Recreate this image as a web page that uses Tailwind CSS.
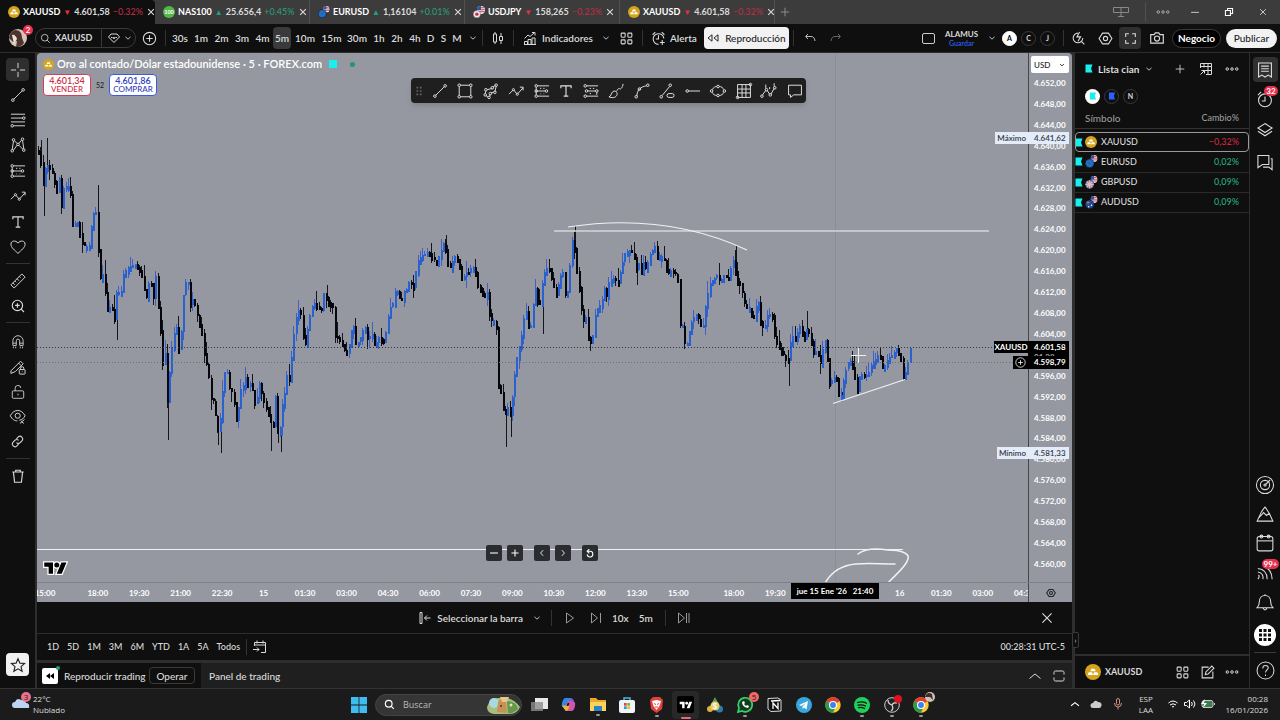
<!DOCTYPE html>
<html lang="es">
<head>
<meta charset="utf-8">
<meta name="viewport" content="width=device-width, initial-scale=1">
<title>XAUUSD 4.601,58</title>
<script src="https://cdn.jsdelivr.net/npm/@tailwindcss/browser@4"></script>
</head>
<body class="h-screen min-h-[720px] flex flex-col overflow-hidden bg-[#2e2e2e] text-[#dbdbdb] text-[10px] leading-3 font-['Lato','Noto_Sans',sans-serif] font-medium">

<!-- Shared icons -->
<svg class="hidden" aria-hidden="true">
  <defs>
  <symbol id="x" viewBox="0 0 28 28"><path d="M6 6l16 16M22 6L6 22"/></symbol>
  <symbol id="plus" viewBox="0 0 28 28"><path d="M14 4v20M4 14h20"/></symbol>
  <symbol id="chev" viewBox="0 0 28 28"><path d="M5 10l9 8 9-8"/></symbol>
  <symbol id="chevup" viewBox="0 0 28 28"><path d="M3 19l11-9 11 9"/></symbol>
  <symbol id="search" viewBox="0 0 28 28"><circle cx="12" cy="12" r="8.500"/><path d="M18 18l7 7"/></symbol>
  <symbol id="dots" viewBox="0 0 28 28"><circle cx="4.500" cy="14" r="2.500"/><circle cx="14" cy="14" r="2.500"/><circle cx="23.500" cy="14" r="2.500"/></symbol>
  <symbol id="grid4" viewBox="0 0 28 28"><rect x="4" y="4" width="7.500" height="7.500" rx="1.500"/><rect x="16.500" y="4" width="7.500" height="7.500" rx="1.500"/><rect x="4" y="16.500" width="7.500" height="7.500" rx="1.500"/><rect x="16.500" y="16.500" width="7.500" height="7.500" rx="1.500"/></symbol>
  <symbol id="trend" viewBox="0 0 28 28"><circle cx="6" cy="22" r="2"/><circle cx="22" cy="6" r="2"/><path d="M7.500 20.500l13-13"/></symbol>
  <symbol id="crosshair" viewBox="0 0 28 28"><path d="M14 3v8M14 17v8M3 14h8M17 14h8"/></symbol>
  <symbol id="fib" viewBox="0 0 28 28"><path d="M3 5h22M3 11h18M3 17h22M7 23h18"/><circle cx="23" cy="11" r="2"/><circle cx="5" cy="23" r="2"/></symbol>
  <symbol id="pattern" viewBox="0 0 28 28"><circle cx="5" cy="23" r="2"/><circle cx="7" cy="6" r="2"/><circle cx="14" cy="13" r="2"/><circle cx="21" cy="5" r="2"/><circle cx="23" cy="22" r="2"/><path d="M5 21l2-13M8.500 7.500l4 4M15.500 11.500l4-5M21 7l2 13M7 22l5.500-7.500M15.500 14.500l6 6"/></symbol>
  <symbol id="forecast" viewBox="0 0 28 28"><path d="M7 6h18M7 14h12M7 22h18M5 8v12" /><circle cx="5" cy="6" r="2"/><circle cx="5" cy="14" r="2"/><circle cx="5" cy="22" r="2"/><circle cx="21" cy="14" r="2"/><path d="M12 9v2M17 9v2M12 18v1M17 18v1"/></symbol>
  <symbol id="forecastdown" viewBox="0 0 28 28"><path d="M7 6h18M9 14h12M7 22h18M23 16v4"/><circle cx="5" cy="6" r="2"/><circle cx="7" cy="14" r="2"/><circle cx="5" cy="22" r="2"/><circle cx="23" cy="14" r="2"/><path d="M12 10h2M17 10h2M12 18h2"/></symbol>
  <symbol id="wave" viewBox="0 0 28 28"><path d="M3 19l6-6M11 13l4 5M17 18l8-9M20 8h5v5"/><circle cx="10" cy="12" r="1.700"/><circle cx="16" cy="19" r="1.700"/></symbol>
  <symbol id="text" viewBox="0 0 28 28"><path d="M5 9V5h18v4M14 5v18M10 23h8"/></symbol>
  <symbol id="heart" viewBox="0 0 28 28"><path d="M14 24C9 19 3 15 3 9.500 3 4 10.500 3 14 8c3.500-5 11-4 11 1.500C25 15 19 19 14 24z"/></symbol>
  <symbol id="ruler" viewBox="0 0 28 28"><path d="M3 20L20 3l5 5L8 25zM16 7l2 2M12.500 10.500l3 3M9 14l2 2M6 17l3 3"/></symbol>
  <symbol id="zoom" viewBox="0 0 28 28"><circle cx="13" cy="13" r="9"/><path d="M19.500 19.500l5 5M9 13h8M13 9v8"/></symbol>
  <symbol id="magnet" viewBox="0 0 28 28"><path d="M5 20v-8a9 9 0 0118 0v8h-6v-8a3 3 0 00-6 0v8zM5 16h6M17 16h6M6 22v3M10 22v3M18 22v3M22 22v3"/></symbol>
  <symbol id="pencillock" viewBox="0 0 28 28"><path d="M3 20L18 5l4 4L10 21l-7 3zM15 8l4 4"/><rect x="16" y="18" width="9" height="7" rx="1"/><path d="M18 18v-2a2.500 2.500 0 015 0v2M20.500 21v1"/></symbol>
  <symbol id="lock" viewBox="0 0 28 28"><rect x="4" y="12" width="20" height="13" rx="2"/><path d="M9 12V8a5 5 0 0110-1M14 17v3"/></symbol>
  <symbol id="eye" viewBox="0 0 28 28"><path d="M2 12c6-11 17-11 23 0-2 4-5 7-9 7M2 12c3 6 7 8 11 8"/><circle cx="13.500" cy="12" r="4"/><path d="M17 24l7-6M19 21l4 3"/></symbol>
  <symbol id="link" viewBox="0 0 28 28"><path d="M12 9l4-4c4-3 10 3 7 7l-4 4c-2 2-5 2-7 0M16 19l-4 4c-4 3-10-3-7-7l4-4c2-2 5-2 7 0"/></symbol>
  <symbol id="trash" viewBox="0 0 28 28"><path d="M4 7h20M10 7V4h8v3M6 7l2 18h12l2-18"/></symbol>
  <symbol id="star" viewBox="0 0 28 28"><path d="M14 3l3.300 7.700 8.200.7-6.200 5.500 1.900 8.100L14 20.700 6.800 25l1.900-8.100-6.200-5.500 8.200-.7z"/></symbol>
  <symbol id="rect" viewBox="0 0 28 28"><path d="M7 5h14M7 23h14M5 7v14M23 7v14"/><circle cx="5" cy="5" r="2"/><circle cx="23" cy="5" r="2"/><circle cx="5" cy="23" r="2"/><circle cx="23" cy="23" r="2"/></symbol>
  <symbol id="polygon" viewBox="0 0 28 28"><path d="M8 12l8-2M17 8l4-3M22 7l-2 8M18 16l-4 1M13 19l-1 3M9 23l-3-2M5 18l1-4"/><circle cx="6" cy="12" r="2"/><circle cx="16" cy="9" r="2"/><circle cx="22" cy="5" r="2"/><circle cx="20" cy="16" r="2"/><circle cx="13" cy="18" r="2"/><circle cx="11" cy="24" r="2"/><circle cx="5" cy="20" r="2"/></symbol>
  <symbol id="brush" viewBox="0 0 28 28"><path d="M3 23c4 0 3-8 8-9 4 0 6 4 4 7-2 4-8 4-12 2zM14 15c2-2 3-5 5-5 3 3 6-4 6-7"/></symbol>
  <symbol id="curve" viewBox="0 0 28 28"><path d="M6 22C6 13 12 7 21 6"/><circle cx="5" cy="23" r="2"/><circle cx="10" cy="11" r="2"/><circle cx="23" cy="5" r="2"/></symbol>
  <symbol id="trendinfo" viewBox="0 0 28 28"><circle cx="5" cy="23" r="2"/><circle cx="19" cy="5" r="2"/><path d="M6.500 21L18 7"/><rect x="14" y="18" width="11" height="6" rx="3"/></symbol>
  <symbol id="hline" viewBox="0 0 28 28"><circle cx="5" cy="14" r="2"/><path d="M7 14h18"/></symbol>
  <symbol id="ellipse" viewBox="0 0 28 28"><path d="M5 12c2-4 5-5 7-5M16 7c3 0 6 2 7 5M23 16c-1 3-4 5-7 5M12 21c-3 0-6-2-7-5"/><circle cx="14" cy="7" r="2"/><circle cx="14" cy="21" r="2"/><circle cx="4" cy="14" r="2"/><circle cx="24" cy="14" r="2"/></symbol>
  <symbol id="gann" viewBox="0 0 28 28"><path d="M4 4h20v20H4zM4 11h20M4 17h20M11 4v20M17 4v20"/><circle cx="24" cy="4" r="2"/><circle cx="4" cy="24" r="2"/></symbol>
  <symbol id="cycle" viewBox="0 0 28 28"><path d="M4 20l5-7M11 13l4 6M17 19l5-9M9 4v6M15 8v3M22 2v5"/><circle cx="3" cy="22" r="2"/><circle cx="10" cy="12" r="2"/><circle cx="16" cy="20" r="2"/><circle cx="23" cy="9" r="2"/></symbol>
  <symbol id="note" viewBox="0 0 28 28"><path d="M4 5h20v15H12l-5 4v-4H4z"/></symbol>
  <symbol id="hex" viewBox="0 0 28 28"><path d="M8.500 4h11L26 14l-6.500 10h-11L2 14z"/><circle cx="14" cy="14" r="4"/></symbol>
  <symbol id="full" viewBox="0 0 28 28"><path d="M5 11V5h6M17 5h6v6M23 17v6h-6M11 23H5v-6"/></symbol>
  <symbol id="max" viewBox="0 0 28 28"><path d="M4 11V7c0-2 1-3 3-3h3M18 4h3c2 0 3 1 3 3v4M24 17v4c0 2-1 3-3 3h-3M10 24H7c-2 0-3-1-3-3v-4M10 4h8M10 24h8"/></symbol>
  <symbol id="goldbars" viewBox="0 0 24 24"><circle cx="12" cy="12" r="12" fill="#d4a41c" stroke="none"/><path d="M9.500 7h5l1.500 4H8zM5.500 12.500h5l1.500 4H4zM13.500 12.500h5l1.500 4h-8z" fill="#fff" stroke="none"/></symbol>
  <symbol id="usflag" viewBox="0 0 24 24"><circle cx="12" cy="12" r="12" fill="#f1eef0" stroke="none"/><path d="M3 5h18M1 11h22M1 17h22" stroke="#c43a50" stroke-width="3"/><path d="M12 0A12 12 0 000 12h12z" fill="#2756a8" stroke="none"/></symbol>
  <symbol id="eur" viewBox="0 0 28 28"><use href="#usflag" x="12" y="0" width="15" height="15"/><circle cx="10" cy="18" r="9.500" fill="#1f66b8" stroke="#0f0f0f"/><circle cx="10" cy="18" r="5" fill="none" stroke="#5da0e0" stroke-width="1.500" stroke-dasharray="1.500 2.400"/></symbol>
  <symbol id="gbp" viewBox="0 0 28 28"><use href="#usflag" x="12" y="0" width="15" height="15"/><circle cx="10" cy="18" r="9.500" fill="#7d84b0" stroke="#0f0f0f"/><path d="M10 9v18M1 18h18M4 12l12 12M16 12L4 24" stroke="#e8b8c0" stroke-width="2.500"/></symbol>
  <symbol id="aud" viewBox="0 0 28 28"><use href="#usflag" x="12" y="0" width="15" height="15"/><circle cx="10" cy="18" r="9.500" fill="#1c4c9c" stroke="#0f0f0f"/><path d="M3 14h7M6.500 11v7" stroke="#e06070" stroke-width="2"/><circle cx="14" cy="20" r="1.600" fill="#fff" stroke="none"/><circle cx="8" cy="23" r="1.600" fill="#fff" stroke="none"/></symbol>
  <symbol id="jpy" viewBox="0 0 28 28"><use href="#usflag" x="9" y="0" width="19" height="19"/><circle cx="9" cy="19" r="8.500" fill="#eee" stroke="#3c3c3c"/><circle cx="9" cy="19" r="4" fill="#d02848" stroke="none"/></symbol>
  <symbol id="flag" viewBox="0 0 16 18"><path d="M1 1h14l-3 8 3 8H1z" fill="currentColor" stroke="none"/></symbol>
  <symbol id="tv" viewBox="-2 2 40 22"><path d="M14 22H7V11H0V4h14zM28 22h-8l7.500-18h8z"/><circle cx="20" cy="8" r="4"/></symbol>
  <symbol id="chrome" viewBox="0 0 28 28"><circle cx="14" cy="14" r="12" fill="#fbc934" stroke="none"/><path d="M14 14L3.600 8A12 12 0 0124.400 8z" fill="#e23b30" stroke="none"/><path d="M14 14L3.600 8A12 12 0 0014 26l4-9z" fill="#279a4c" stroke="none"/><circle cx="14" cy="14" r="5.500" fill="#3f82ee" stroke="#fff" stroke-width="1.800"/></symbol>
  </defs>
</svg>

<!-- Window tabs -->
<header class="h-6 shrink-0 flex items-center bg-[#3c3c3c]">
  <nav class="flex h-full text-[9px] font-bold" aria-label="Pestañas">
    <div class="w-[155px] h-full flex items-center gap-[3px] pl-2 pr-1 rounded-tr bg-[#0f0f0f] whitespace-nowrap">
      <svg class="size-3 shrink-0"><use href="#goldbars"/></svg><a href="#xau" class="text-white">XAUUSD</a><span class="text-[8px] text-[#e03048]">▼</span><span>4.601,58</span><span class="font-medium text-[#b82c44]">−0.32%</span><button aria-label="Cerrar" class="ml-auto"><svg class="size-2.5 fill-none stroke-current stroke-3"><use href="#x"/></svg></button>
    </div>
    <div class="w-[155px] h-full flex items-center gap-[3px] pl-2 pr-1 border-r border-[#505050] whitespace-nowrap">
      <svg class="size-3 shrink-0" viewBox="0 0 24 24"><circle cx="12" cy="12" r="12" fill="#54b848"/><text x="12" y="16" text-anchor="middle" font-size="11" font-weight="700" fill="#fff">100</text></svg><a href="#nas" class="text-white">NAS100</a><span class="text-[8px] text-[#22a07c]">▲</span><span>25.656,4</span><span class="font-medium text-[#2c9a78]">+0.45%</span><button aria-label="Cerrar" class="ml-auto"><svg class="size-2.5 fill-none stroke-current stroke-3"><use href="#x"/></svg></button>
    </div>
    <div class="w-[155px] h-full flex items-center gap-[3px] pl-2 pr-1 border-r border-[#505050] whitespace-nowrap">
      <svg class="size-3 shrink-0"><use href="#eur"/></svg><a href="#eurusd" class="text-white">EURUSD</a><span class="text-[8px] text-[#22a07c]">▲</span><span>1,16104</span><span class="font-medium text-[#2c9a78]">+0.01%</span><button aria-label="Cerrar" class="ml-auto"><svg class="size-2.5 fill-none stroke-current stroke-3"><use href="#x"/></svg></button>
    </div>
    <div class="w-[155px] h-full flex items-center gap-[3px] pl-2 pr-1 border-r border-[#505050] whitespace-nowrap">
      <svg class="size-3 shrink-0"><use href="#jpy"/></svg><a href="#usdjpy" class="text-white">USDJPY</a><span class="text-[8px] text-[#e03048]">▼</span><span>158,265</span><span class="font-medium text-[#b82c44]">−0.23%</span><button aria-label="Cerrar" class="ml-auto"><svg class="size-2.5 fill-none stroke-current stroke-3"><use href="#x"/></svg></button>
    </div>
    <div class="w-[155px] h-full flex items-center gap-[3px] pl-2 pr-1 border-r border-[#505050] whitespace-nowrap">
      <svg class="size-3 shrink-0"><use href="#goldbars"/></svg><a href="#xau2" class="text-white">XAUUSD</a><span class="text-[8px] text-[#e03048]">▼</span><span>4.601,58</span><span class="font-medium text-[#b82c44]">−0.32%</span><button aria-label="Cerrar" class="ml-auto"><svg class="size-2.5 fill-none stroke-current stroke-3"><use href="#x"/></svg></button>
    </div>
  </nav>
  <button aria-label="Nueva pestaña" class="px-1"><svg class="size-3 fill-none stroke-[#999] stroke-2"><use href="#plus"/></svg></button>
  <div class="ml-auto flex items-center">
    <svg class="w-4 h-3 mr-4 fill-none stroke-[#888] stroke-1" viewBox="0 0 16 12"><path d="M.5 1.500h15v5H.5zM8 1.500v9M5 10.500h6"/></svg>
    <span class="w-px h-5 bg-[#505050] mr-2.5"></span>
    <button aria-label="Más" class="mr-5"><svg class="size-3.5 fill-none stroke-[#aaa] stroke-2"><use href="#dots"/></svg></button>
    <button aria-label="Minimizar" class="mr-6"><svg class="size-2.5 fill-none stroke-white stroke-2" viewBox="0 0 28 28"><path d="M3 15h22"/></svg></button>
    <button aria-label="Restaurar" class="mr-6"><svg class="size-2.5 fill-none stroke-white stroke-3" viewBox="0 0 28 28"><path d="M4 10h14v14H4zM10 10V4h14v14h-6"/></svg></button>
    <button aria-label="Cerrar ventana" class="mr-3"><svg class="size-2.5 fill-none stroke-white stroke-2"><use href="#x"/></svg></button>
  </div>
</header>

<!-- Main toolbar -->
<div class="h-7 shrink-0 flex items-center bg-[#0f0f0f] font-semibold whitespace-nowrap mb-px">
  <button aria-label="Perfil" class="relative w-[35px] h-7 grid place-items-center"><svg class="size-[18px]" viewBox="0 0 18 18"><circle cx="9" cy="9" r="9" fill="#d8c4b6"/><path d="M0 9a9 9 0 016-8c5 0 7 3 7 8l2 5a9 9 0 01-8 4l1-6-4 1z" fill="#4c352e"/><path d="M3 6c2-1 4 1 5 4l-3 5z" fill="#eee3dc"/></svg><span class="absolute left-[23px] top-px size-2.5 rounded-full bg-[#e8304f] text-white text-[8px] leading-[10px] text-center">2</span></button>
  <div class="w-[101px] h-5 flex items-center rounded-full border border-[#3a3a3a]">
    <button class="w-[66px] h-full flex items-center gap-1 pl-1 border-r border-[#3a3a3a] text-[9px] font-bold"><svg class="size-[11px] fill-none stroke-current stroke-2"><use href="#search"/></svg>XAUUSD</button>
    <button aria-label="Marcador" class="flex items-center pl-1.5 gap-1"><svg class="w-3 h-2.5 fill-none stroke-current stroke-1" viewBox="0 0 12 10"><path d="M3 1h6l2.500 3L6 9.500.5 4zM3 4.500h1.500M7.500 4.500H9M5 4l1 2 1-2"/></svg><svg class="size-2 fill-none stroke-current stroke-3"><use href="#chev"/></svg></button>
  </div>
  <button aria-label="Comparar" class="w-[26px] grid place-items-center"><svg class="size-[15px] fill-none stroke-current stroke-2" viewBox="0 0 28 28"><circle cx="14" cy="14" r="11.500"/><path d="M14 8v12M8 14h12"/></svg></button>
  <span class="w-px h-4 mx-[3px] bg-[#333]"></span>
  <div class="flex items-center">
    <button class="w-[22px]">30s</button><button class="w-5">1m</button><button class="w-[21px]">2m</button><button class="w-5">3m</button><button class="w-[21px]">4m</button><button class="w-[18px] h-[22px] rounded bg-[#3a3a3a]">5m</button><button class="w-[28px]">10m</button><button class="w-[25px]">15m</button><button class="w-[26px]">30m</button><button class="w-[18px]">1h</button><button class="w-[18px]">2h</button><button class="w-[18px]">4h</button><button class="w-[13px]">D</button><button class="w-[13px]">S</button><button class="w-[14px]">M</button>
    <button aria-label="Más intervalos" class="w-[18px] grid place-items-center"><svg class="size-2 fill-none stroke-current stroke-3"><use href="#chev"/></svg></button>
  </div>
  <span class="w-px h-4 bg-[#333]"></span>
  <button aria-label="Velas" class="w-[30px] grid place-items-center"><svg class="w-3 h-[14px] fill-none stroke-current stroke-1" viewBox="0 0 12 14"><path d="M1.500 3h3v8h-3zM3 1v2M3 11v2M7.500 5.500h3v4h-3zM9 2v3M9 10v3"/></svg></button>
  <span class="w-px h-4 bg-[#333]"></span>
  <button class="flex items-center gap-1.5 pl-2.5"><svg class="w-3 h-[13px] fill-none stroke-current stroke-1" viewBox="0 0 12 13"><path d="M.5 6.500L4 3l2 1.500L10 1M8 .5h3v3M.5 12.500v-3h3v3M4 12.500v-5h3v5M8 12.500V6h3v6.500zM0 12.500h12"/></svg>Indicadores</button>
  <button aria-label="Favoritos" class="w-[26px] grid place-items-center"><svg class="size-2 fill-none stroke-current stroke-3"><use href="#chev"/></svg></button>
  <button aria-label="Plantillas" class="w-[15px]"><svg class="size-[15px] fill-none stroke-current stroke-2"><use href="#grid4"/></svg></button>
  <span class="w-px h-4 ml-2 bg-[#333]"></span>
  <button class="flex items-center gap-1 pl-2"><svg class="size-[15px] fill-none stroke-current stroke-2" viewBox="0 0 28 28"><path d="M24 14a10 10 0 10-10 11M14 8v7h-5M3 7l5-5M20 2l5 5M21 17v9M16.500 21.500h9"/></svg>Alerta</button>
  <button class="ml-[7px] h-[22px] w-[85px] shrink-0 flex items-center justify-center gap-1.5 rounded bg-[#f2f2f2] text-[#222] font-medium"><svg class="w-3 h-2 fill-none stroke-current stroke-1" viewBox="0 0 12 8"><path d="M5 .8v6.400L1 4zM11 .8v6.400L7 4z"/></svg>Reproducción</button>
  <span class="w-px h-4 ml-1 bg-[#333]"></span>
  <button aria-label="Deshacer" class="ml-2.5"><svg class="w-3 h-2.5 fill-none stroke-[#bbb] stroke-1" viewBox="0 0 12 10"><path d="M4 1L1.500 3.500 4 6M2 3.500h5q3.500 0 4 4.500"/></svg></button>
  <button aria-label="Rehacer" class="ml-3.5"><svg class="w-3 h-2.5 fill-none stroke-[#666] stroke-1" viewBox="0 0 12 10"><path d="M8 1l2.500 2.500L8 6M10 3.500H5Q1.500 3.500 1 8"/></svg></button>
  <div class="ml-auto flex items-center pr-[3px]">
    <span class="w-[13px] h-[11px] rounded-xs border border-[#ccc]"></span>
    <button class="w-[53px] text-[8px] leading-[9px] font-bold">ALAMUS<span class="block text-[7px] leading-2 font-semibold text-[#2d5cf0]">Guardar</span></button>
    <svg class="size-2 mr-1.5 fill-none stroke-current stroke-3"><use href="#chev"/></svg>
    <span class="flex gap-1 text-[7px] leading-[13px] text-center font-bold"><button class="size-[15px] rounded-full border border-white bg-white text-black">A</button><button class="size-[15px] rounded-full border border-[#3a3a3a]">C</button><button class="size-[15px] rounded-full border border-[#3a3a3a]">J</button></span>
    <span class="w-px h-4 ml-2 bg-[#333]"></span>
    <button aria-label="Búsqueda rápida" class="w-[29px] grid place-items-center"><svg class="size-[15px] fill-none stroke-current stroke-2" viewBox="0 0 28 28"><path d="M13 4a9 9 0 109 9M19 19l6 6M16 2l-5 9h7l-5 8"/></svg></button>
    <button aria-label="Configuración" class="w-6 grid place-items-center"><svg class="size-[15px] fill-none stroke-current stroke-2"><use href="#hex"/></svg></button>
    <button aria-label="Pantalla completa" class="size-[22px] mx-0.5 grid place-items-center rounded bg-[#303030]"><svg class="size-[15px] fill-none stroke-current stroke-2"><use href="#full"/></svg></button>
    <button aria-label="Captura" class="w-[27px] grid place-items-center"><svg class="size-4 fill-none stroke-current stroke-2" viewBox="0 0 28 28"><path d="M3 8h6l2-3h6l2 3h6v15H3z"/><circle cx="14" cy="15" r="4.500"/></svg></button>
    <button class="w-[49px] h-[19px] ml-0.5 rounded-full border border-[#3a3a3a] bg-black text-white font-bold">Negocio</button>
    <button class="w-[51px] h-[19px] ml-[5px] rounded-full bg-[#f2f2f2] text-[#222] font-medium">Publicar</button>
  </div>
</div>

<div class="flex-1 min-h-0 flex">

  <!-- Drawing tools -->
  <aside class="w-[35px] mr-0.5 shrink-0 flex flex-col items-center bg-[#0f0f0f] pt-[5px]">
    <button aria-label="Cruz" class="w-[23px] h-[23px] mb-px grid place-items-center rounded bg-[#2e2e2e]"><svg class="size-[18px] fill-none stroke-current stroke-[1.500]"><use href="#crosshair"/></svg></button>
    <button aria-label="Línea de tendencia" class="h-[25px]"><svg class="size-[18px] fill-none stroke-current stroke-[1.500]"><use href="#trend"/></svg></button>
    <button aria-label="Fibonacci" class="h-[25px]"><svg class="size-[18px] fill-none stroke-current stroke-[1.500]"><use href="#fib"/></svg></button>
    <button aria-label="Patrones" class="h-[26px]"><svg class="size-[18px] fill-none stroke-current stroke-[1.500]"><use href="#pattern"/></svg></button>
    <button aria-label="Previsión" class="h-[25px]"><svg class="size-[18px] fill-none stroke-current stroke-[1.500]"><use href="#forecast"/></svg></button>
    <button aria-label="Ondas" class="h-[26px]"><svg class="size-[18px] fill-none stroke-current stroke-[1.500]"><use href="#wave"/></svg></button>
    <button aria-label="Texto" class="h-[25px]"><svg class="size-4 fill-none stroke-current stroke-2"><use href="#text"/></svg></button>
    <button aria-label="Iconos" class="h-[25px]"><svg class="size-[18px] fill-none stroke-current stroke-[1.500]"><use href="#heart"/></svg></button>
    <span class="w-6 h-px my-1 bg-[#333]"></span>
    <button aria-label="Medir" class="h-[25px]"><svg class="size-[18px] fill-none stroke-current stroke-[1.500]"><use href="#ruler"/></svg></button>
    <button aria-label="Ampliar" class="h-[25px]"><svg class="size-4 fill-none stroke-current stroke-2"><use href="#zoom"/></svg></button>
    <span class="w-6 h-px mt-1 mb-1.5 bg-[#333]"></span>
    <button aria-label="Imán" class="h-[25px]"><svg class="size-4 fill-none stroke-current stroke-[1.500]"><use href="#magnet"/></svg></button>
    <button aria-label="Modo dibujo" class="h-[25px]"><svg class="size-[18px] fill-none stroke-current stroke-[1.500]"><use href="#pencillock"/></svg></button>
    <button aria-label="Bloquear" class="h-[25px]"><svg class="size-4 fill-none stroke-current stroke-[1.500]"><use href="#lock"/></svg></button>
    <button aria-label="Ocultar" class="h-[25px]"><svg class="size-[18px] fill-none stroke-current stroke-[1.500]"><use href="#eye"/></svg></button>
    <button aria-label="Vincular" class="h-[25px]"><svg class="size-[15px] fill-none stroke-current stroke-2"><use href="#link"/></svg></button>
    <span class="w-6 h-px my-1 bg-[#333]"></span>
    <button aria-label="Eliminar" class="h-[25px]"><svg class="size-4 fill-none stroke-current stroke-2"><use href="#trash"/></svg></button>
    <button aria-label="Favoritos" class="size-[23px] mt-auto mb-3 grid place-items-center rounded bg-[#f2f2f2] text-[#222]"><svg class="size-4 fill-none stroke-current stroke-2"><use href="#star"/></svg></button>
  </aside>

  <main class="flex-1 min-w-0 flex flex-col">
    <!-- Chart -->
    <section class="flex-1 min-h-0 flex flex-col rounded-t bg-[#9598a1] text-white overflow-hidden">
      <div class="flex-1 min-h-0 flex">
        <div class="relative flex-1 min-w-0 overflow-hidden">
          <svg class="absolute inset-0 size-full" aria-label="Gráfico de velas XAUUSD">
            <g transform="translate(-37 -53)">
              <path d="M835.500 53v530" stroke="#8b8e98" stroke-width="1"/>
              <path id="wicksUp" stroke="#4260c4" stroke-width="1" fill="none"/>
              <path id="wicksDown" stroke="#15161c" stroke-width="1" fill="none"/>
              <path id="up" stroke="#2962cf" stroke-width="2" fill="none"/>
              <path id="down" stroke="#06070c" stroke-width="2" fill="none"/>
              <path d="M37 347.500h992" stroke="#33353c" stroke-dasharray="1 2"/>
              <path d="M37 362.500h992" stroke="#6c6f78" stroke-dasharray="1 2"/>
              <g stroke="#f0f1f4" fill="none" stroke-width="1">
                <path d="M554 231h435" stroke="#d4d6dc" stroke-width="1.500"/>
                <path d="M568 227Q665 212 747 250" stroke-width="1.200"/>
                <path d="M833 403.500L905 379.500" stroke-width="1.200"/>
                <path d="M37 549.500h866"/>
                <path d="M858.500 348v15M851 355.500h15"/>
                <g stroke-width="1.500" stroke-linecap="round"><path d="M858 554c6-5 18-6 30-4 12 0 22 3 20 9-2 8-14 17-20 24M825 583c7-12 18-18 31-19 12-1 24 0 39 0"/></g>
              </g>
            </g>
          </svg>

          <div class="relative flex flex-col items-start gap-1 pt-[5px] pl-1.5">
            <h1 class="flex items-center gap-[3px] text-[11px] font-semibold"><svg class="size-[11px]"><use href="#goldbars"/></svg>Oro al contado/Dólar estadounidense · 5 · FOREX.com <svg class="size-2 ml-1 text-[#18f0f0]" viewBox="0 0 8 8"><path d="M0 0h8v8H0z" fill="currentColor"/></svg><span class="size-[5px] ml-2.5 rounded-full bg-[#20957a]"></span></h1>
            <div class="flex items-center text-[9px] leading-[9px] text-center">
              <button class="w-12 h-[22px] rounded border border-[#d34055] bg-white text-[#cc2f46]"><span class="block font-semibold">4.601,34</span><span class="block text-[8px]">VENDER</span></button>
              <span class="w-[18px] text-[7px] text-[#222]">52</span>
              <button class="w-12 h-[22px] rounded border border-[#3c5be0] bg-white text-[#3040c0]"><span class="block font-semibold">4.601,86</span><span class="block text-[8px]">COMPRAR</span></button>
            </div>
          </div>

          <!-- Floating drawing palette -->
          <div class="absolute left-[374px] top-[25px] w-[395px] h-[25px] flex items-center justify-between pl-1 pr-0.5 rounded bg-[#1f1f1f] shadow-md text-[#e2e2e2]">
            <svg class="w-2 h-2.5" viewBox="0 0 8 12" fill="#666"><path d="M1 1h2v2H1zM5 1h2v2H5zM1 5h2v2H1zM5 5h2v2H5zM1 9h2v2H1zM5 9h2v2H5z"/></svg>
            <button aria-label="Tendencia"><svg class="size-[18px] fill-none stroke-current stroke-[1.500]"><use href="#trend"/></svg></button>
            <button aria-label="Rectángulo"><svg class="size-[18px] fill-none stroke-current stroke-[1.500]"><use href="#rect"/></svg></button>
            <button aria-label="Polígono"><svg class="size-[18px] fill-none stroke-current stroke-[1.500]"><use href="#polygon"/></svg></button>
            <button aria-label="Ruta"><svg class="size-[18px] fill-none stroke-current stroke-[1.500]"><use href="#wave"/></svg></button>
            <button aria-label="Posición larga"><svg class="size-[18px] fill-none stroke-current stroke-[1.500]"><use href="#forecast"/></svg></button>
            <button aria-label="Texto"><svg class="size-4 fill-none stroke-current stroke-2"><use href="#text"/></svg></button>
            <button aria-label="Posición corta"><svg class="size-[18px] fill-none stroke-current stroke-[1.500]"><use href="#forecastdown"/></svg></button>
            <button aria-label="Pincel"><svg class="size-[18px] fill-none stroke-current stroke-[1.500]"><use href="#brush"/></svg></button>
            <button aria-label="Curva"><svg class="size-[18px] fill-none stroke-current stroke-[1.500]"><use href="#curve"/></svg></button>
            <button aria-label="Línea con datos"><svg class="size-[18px] fill-none stroke-current stroke-[1.500]"><use href="#trendinfo"/></svg></button>
            <button aria-label="Rayo horizontal"><svg class="size-[18px] fill-none stroke-current stroke-[1.500]"><use href="#hline"/></svg></button>
            <button aria-label="Elipse"><svg class="size-[18px] fill-none stroke-current stroke-[1.500]"><use href="#ellipse"/></svg></button>
            <button aria-label="Caja de Gann"><svg class="size-[18px] fill-none stroke-current stroke-[1.500]"><use href="#gann"/></svg></button>
            <button aria-label="Ciclos"><svg class="size-[18px] fill-none stroke-current stroke-[1.500]"><use href="#cycle"/></svg></button>
            <button aria-label="Comentario"><svg class="size-[18px] fill-none stroke-current stroke-[1.500]"><use href="#note"/></svg></button>
          </div>

          <!-- Tags against the price axis -->
          <span class="absolute right-0 top-[79px] px-0.5 text-[8px] font-semibold bg-[#e3ecf8] text-[#333a48]">Máximo</span>
          <span class="absolute right-0 top-[288px] w-[34px] text-center text-[8px] font-bold bg-black">XAUUSD</span>
          <span class="absolute right-0 top-[303px] w-[15px] h-[13px] bg-black grid place-items-center"><svg class="size-[11px] fill-none stroke-white stroke-2" viewBox="0 0 28 28"><circle cx="14" cy="14" r="12"/><path d="M14 8v12M8 14h12"/></svg></span>
          <span class="absolute right-0 top-[394px] px-0.5 text-[8px] font-semibold bg-[#e3ecf8] text-[#333a48]">Mínimo</span>

          <!-- Chart navigation -->
          <div class="absolute left-[449px] bottom-[21px] flex gap-[5px]">
            <button aria-label="Alejar" class="size-4 grid place-items-center rounded-xs bg-[#2a2c30]"><svg class="size-2.5 fill-none stroke-white stroke-3" viewBox="0 0 28 28"><path d="M3 14h22"/></svg></button>
            <button aria-label="Acercar" class="size-4 mr-1.5 grid place-items-center rounded-xs bg-[#2a2c30]"><svg class="size-2.5 fill-none stroke-white stroke-3"><use href="#plus"/></svg></button>
            <button aria-label="Izquierda" class="size-4 grid place-items-center rounded-xs bg-[#2a2c30]"><svg class="size-2 fill-none stroke-white stroke-3" viewBox="0 0 28 28"><path d="M18 4L9 14l9 10"/></svg></button>
            <button aria-label="Derecha" class="size-4 mr-1.5 grid place-items-center rounded-xs bg-[#2a2c30]"><svg class="size-2 fill-none stroke-white stroke-3" viewBox="0 0 28 28"><path d="M10 4l9 10-9 10"/></svg></button>
            <button aria-label="Restablecer" class="size-4 grid place-items-center rounded-xs bg-[#2a2c30]"><svg class="size-2.5 fill-none stroke-white stroke-3" viewBox="0 0 28 28"><path d="M7 9h7a8 8 0 11-8 9M12 3L6 9l6 6"/></svg></button>
          </div>

          <svg class="absolute left-[6px] bottom-[7px] w-[25px] h-[14px] overflow-visible"><use href="#tv" fill="#fff" stroke="#fff" stroke-width="4"/><use href="#tv" fill="#000"/></svg>
        </div>

        <!-- Price axis -->
        <div class="relative w-11 shrink-0 flex flex-col border-l border-[#44464e] pb-[13px] text-[8px] font-bold">
          <div class="relative mt-[3px] ml-0.5 mr-[3px] text-[#222]">
            <select aria-label="Divisa" class="block w-full h-[17px] appearance-none px-[3px] rounded-xs bg-white text-[8px] font-medium"><option>USD</option></select>
            <svg class="absolute right-1 top-1.5 size-1.5 pointer-events-none fill-none stroke-current stroke-4"><use href="#chev"/></svg>
          </div>
          <div id="prices" class="flex-1 flex flex-col justify-between pt-[5px] pl-[5px]"></div>
          <span class="absolute -left-px top-[79px] w-[41px] pl-1.5 bg-[#e3ecf8] text-[#333a48] font-semibold">4.641,62</span>
          <span class="absolute -left-px top-[288px] w-[41px] pl-1.5 h-[18px] overflow-hidden bg-black">4.601,58<span class="block leading-2 text-[#aaa]">01:28</span></span>
          <span class="absolute -left-px top-[303px] w-[41px] pl-1.5 h-[13px] bg-black">4.598,79</span>
          <span class="absolute -left-px top-[394px] w-[41px] pl-1.5 bg-[#e3ecf8] text-[#333a48] font-semibold">4.581,33</span>
        </div>
      </div>

      <!-- Time axis -->
      <div class="h-5 shrink-0 flex border-t border-[#7e818b] text-[8px] font-bold text-center">
        <div class="relative flex-1 min-w-0 flex items-center overflow-hidden">
          <span class="w-10 shrink-0 -ml-3">15:00</span><span class="w-3 shrink-0"></span>
          <div class="w-[622px] shrink-0 flex *:flex-1"><span>18:00</span><span>19:30</span><span>21:00</span><span>22:30</span><span>15</span><span>01:30</span><span>03:00</span><span>04:30</span><span>06:00</span><span>07:30</span><span>09:00</span><span>10:30</span><span>12:00</span><span>13:30</span><span>15:00</span></div>
          <div class="w-[83px] ml-3.5 shrink-0 flex *:flex-1"><span>18:00</span><span>19:30</span></div>
          <div class="w-[166px] ml-[83px] shrink-0 flex *:flex-1"><span>16</span><span>01:30</span><span>03:00</span><span>04:30</span></div>
          <span class="absolute left-[754px] top-0 w-[88px] h-4 leading-4 bg-black whitespace-pre">jue 15 Ene '26   21:40</span>
        </div>
        <div class="w-11 shrink-0 grid place-items-center border-l border-[#44464e]"><svg class="size-2.5 fill-none stroke-[#222] stroke-3"><use href="#hex"/></svg></div>
      </div>
    </section>

    <!-- Replay controls -->
    <div class="relative h-8 shrink-0 flex items-center justify-center border-b border-[#2e2e2e] bg-[#0f0f0f] font-semibold">
      <button class="flex items-center gap-1.5"><svg class="w-3 h-3 fill-none stroke-current stroke-1" viewBox="0 0 12 12"><path d="M1 .5h2v11H1zM11.500 6h-6M8 3.500L5.500 6 8 8.500"/></svg>Seleccionar la barra<svg class="size-2 ml-1 fill-none stroke-current stroke-3"><use href="#chev"/></svg></button>
      <span class="w-px h-4 ml-2.5 mr-2 bg-[#333]"></span>
      <button aria-label="Reproducir" class="ml-1"><svg class="size-3 fill-none stroke-[#999] stroke-1" viewBox="0 0 12 12"><path d="M2.500 1l7 5-7 5z"/></svg></button>
      <button aria-label="Avanzar" class="ml-3.5"><svg class="size-3 fill-none stroke-[#999] stroke-1" viewBox="0 0 12 12"><path d="M1.500 1l6 5-6 5zM10.500 1v10"/></svg></button>
      <button class="ml-2.5">10x</button><button class="ml-2.5">5m</button>
      <span class="w-px h-4 mx-3 bg-[#333]"></span>
      <button aria-label="Ir al final"><svg class="size-3 fill-none stroke-[#999] stroke-1" viewBox="0 0 12 12"><path d="M.5 1l6 5-6 5zM8.500 1v10M11 1v10"/></svg></button>
      <button aria-label="Cerrar reproducción" class="absolute right-[17px]"><svg class="size-4 fill-none stroke-current stroke-2"><use href="#x"/></svg></button>
    </div>

    <!-- Date ranges -->
    <div class="h-[26px] shrink-0 flex items-center bg-[#0f0f0f] pl-2.5 pr-[7px] font-medium text-[9px]">
      <div class="flex gap-2"><button>1D</button><button>5D</button><button>1M</button><button>3M</button><button>6M</button><button>YTD</button><button>1A</button><button>5A</button><button>Todos</button></div>
      <span class="w-px h-4 mx-1.5 bg-[#333]"></span>
      <button aria-label="Ir a fecha"><svg class="size-[14px] fill-none stroke-current stroke-1" viewBox="0 0 14 14"><path d="M1.500 6V2.500h11v10H8M4 .5v3M10 .5v3M1.500 5h11M0 9.500h6M4 7.500l2 2-2 2"/></svg></button>
      <button class="ml-auto">00:28:31 UTC-5</button>
    </div>

    <!-- Trading panel -->
    <div class="h-[25px] mt-[3px] shrink-0 flex items-center bg-[#1f1f1f]">
      <div class="h-full w-[164px] flex items-center pl-[5px] bg-[#0f0f0f]">
        <span class="relative size-4 grid place-items-center rounded-xs bg-white"><svg class="w-2 h-1.5" viewBox="0 0 8 6" fill="#000"><path d="M4 0v6L0 3zM8 0v6L4 3z"/></svg><i class="absolute -right-0.5 -top-0.5 size-1 rounded-full bg-[#22a07c]"></i></span>
        <button class="pl-1.5">Reproducir trading</button>
        <button class="ml-auto mr-1.5 w-[46px] h-[17px] rounded border border-[#3a3a3a]">Operar</button>
      </div>
      <button class="pl-2">Panel de trading</button>
      <button aria-label="Abrir panel" class="ml-auto"><svg class="size-3.5 fill-none stroke-current stroke-2"><use href="#chevup"/></svg></button>
      <button aria-label="Maximizar panel" class="ml-2.5 mr-1.5"><svg class="size-[14px] fill-none stroke-current stroke-2"><use href="#max"/></svg></button>
    </div>
  </main>

  <!-- Watchlist -->
  <section class="relative w-[174px] ml-[3px] shrink-0 flex flex-col bg-[#0f0f0f]">
    <button aria-label="Contraer" class="absolute -left-[3px] top-[579px] w-[7px] h-4 rounded-xs border border-[#3a3a3a] bg-[#0f0f0f] text-[7px] leading-3">›</button>
    <div class="h-[31px] shrink-0 flex items-center pl-2.5 pr-2.5">
      <svg class="w-2 h-[9px] text-[#18f0f0] mr-[5px]"><use href="#flag"/></svg><h2 class="font-bold text-[10px]">Lista cian</h2><svg class="size-2 ml-1.5 fill-none stroke-current stroke-3"><use href="#chev"/></svg>
      <button aria-label="Agregar símbolo" class="ml-auto"><svg class="size-3 fill-none stroke-current stroke-2"><use href="#plus"/></svg></button>
      <button aria-label="Vista de tabla" class="ml-[13px]"><svg class="size-[14px] fill-none stroke-current stroke-2" viewBox="0 0 28 28"><path d="M3 12V3h22v22H14M3 9h22M10 3v8M18 3v22M10 17h15M3 25l8-8M5 17h6v6"/></svg></button>
      <button aria-label="Más" class="ml-3"><svg class="size-3.5 fill-none stroke-current stroke-2"><use href="#dots"/></svg></button>
    </div>
    <div class="h-6 shrink-0 flex items-center gap-1 pl-2.5">
      <button aria-label="Lista cian" class="size-[15px] grid place-items-center rounded-full bg-white text-[#18f0f0]"><svg class="w-2 h-2"><use href="#flag"/></svg></button>
      <button aria-label="Lista azul" class="size-[15px] grid place-items-center rounded-full border border-[#3a3a3a] text-[#2962ff]"><svg class="w-2 h-2"><use href="#flag"/></svg></button>
      <button class="size-[15px] rounded-full border border-[#3a3a3a] text-[7px] leading-3 font-bold">N</button>
    </div>
    <table class="w-full border-collapse text-[9px]">
      <thead class="text-[10px]"><tr class="h-5 border-b border-[#333] text-[#999]"><th class="pl-2.5 text-left font-medium">Símbolo</th><th class="pr-2.5 text-right font-medium text-[9px]">Cambio%</th></tr><tr class="h-1"><td></td><td></td></tr></thead>
      <tbody>
        <tr class="h-5 rounded outline outline-[#999] -outline-offset-1"><td><div class="flex items-center"><svg class="w-2 h-[9px] mr-0.5 text-[#18f0f0]"><use href="#flag"/></svg><svg class="size-3 mr-1"><use href="#goldbars"/></svg>XAUUSD</div></td><td class="pr-2.5 text-right text-[#c82a3c]">−0,32%</td></tr>
        <tr class="h-5 border-b border-[#2a2a2a]"><td><div class="flex items-center"><svg class="w-2 h-[9px] mr-0.5 text-[#18f0f0]"><use href="#flag"/></svg><svg class="size-[13px] mr-[3px]"><use href="#eur"/></svg>EURUSD</div></td><td class="pr-2.5 text-right text-[#28a880]">0,02%</td></tr>
        <tr class="h-5 border-b border-[#2a2a2a]"><td><div class="flex items-center"><svg class="w-2 h-[9px] mr-0.5 text-[#18f0f0]"><use href="#flag"/></svg><svg class="size-[13px] mr-[3px]"><use href="#gbp"/></svg>GBPUSD</div></td><td class="pr-2.5 text-right text-[#28a880]">0,09%</td></tr>
        <tr class="h-5 border-b border-[#2a2a2a]"><td><div class="flex items-center"><svg class="w-2 h-[9px] mr-0.5 text-[#18f0f0]"><use href="#flag"/></svg><svg class="size-[13px] mr-[3px]"><use href="#aud"/></svg>AUDUSD</div></td><td class="pr-2.5 text-right text-[#28a880]">0,09%</td></tr>
      </tbody>
    </table>
    <div class="h-[34px] mt-auto shrink-0 flex items-center border-t-2 border-[#2e2e2e] pl-2.5 pr-2.5">
      <svg class="size-4"><use href="#goldbars"/></svg><b class="pl-1 text-[9px]">XAUUSD</b>
      <button aria-label="Cuadrícula" class="ml-auto"><svg class="size-[15px] fill-none stroke-current stroke-2"><use href="#grid4"/></svg></button>
      <button aria-label="Editar nota" class="ml-2.5"><svg class="size-[15px] fill-none stroke-current stroke-2" viewBox="0 0 28 28"><path d="M16 4H4v20h20V12M10 18l1-5L22 2l4 4-11 11z"/></svg></button>
      <button aria-label="Más" class="ml-2.5"><svg class="size-3.5 fill-none stroke-current stroke-2"><use href="#dots"/></svg></button>
    </div>
  </section>

  <!-- Side rail -->
  <aside class="w-[30px] ml-px shrink-0 flex flex-col items-center bg-[#0f0f0f]">
    <button aria-label="Listas" class="size-[25px] mt-1 mb-0.5 grid place-items-center rounded bg-[#303030]"><svg class="size-[18px] fill-none stroke-current stroke-[1.700]" viewBox="0 0 28 28"><path d="M4 3h20v22l-5-3-5 3-5-3-5 3zM8 8h12M8 12h12M8 16h12"/></svg></button>
    <button aria-label="Alertas" class="relative h-[30px]"><svg class="size-[18px] fill-none stroke-current stroke-[1.700]" viewBox="0 0 28 28"><circle cx="14" cy="16" r="10"/><path d="M14 10v7H9M3 8l5-5M20 3l5 5"/></svg><span class="absolute -right-1 top-0.5 w-3.5 h-2.5 rounded-full bg-[#e8304f] text-white text-[8px] leading-[10px] font-bold text-center">32</span></button>
    <button aria-label="Capas" class="h-[32px]"><svg class="size-[18px] fill-none stroke-current stroke-[1.700]" viewBox="0 0 28 28"><path d="M14 4l11 7-11 7L3 11zM3 16l11 7 11-7"/></svg></button>
    <button aria-label="Chats" class="h-[31px]"><svg class="size-[18px] fill-none stroke-current stroke-[1.700]" viewBox="0 0 28 28"><path d="M3 4h17v14H10l-7 5zM23 9h2v17l-5-4h-9"/></svg></button>
    <button aria-label="Screener" class="h-[29px] mt-auto"><svg class="size-5 fill-none stroke-current stroke-[1.500]" viewBox="0 0 28 28"><circle cx="14" cy="14" r="12"/><circle cx="14" cy="14" r="6.500"/><circle cx="14" cy="14" r="1.500"/><path d="M15 13l6-6"/></svg></button>
    <button aria-label="Ideas" class="h-[29px]"><svg class="size-5 fill-none stroke-current stroke-[1.500]" viewBox="0 0 28 28"><path d="M14 4l6 9-4 3-4-4-8 9M9 11L3 24h22l-5-11M14 4l-5 7"/></svg></button>
    <button aria-label="Calendario" class="h-[29px]"><svg class="size-5 fill-none stroke-current stroke-[1.500]" viewBox="0 0 28 28"><rect x="3" y="5" width="22" height="20" rx="3"/><path d="M3 11h22"/><circle cx="9" cy="5" r="2"/><circle cx="19" cy="5" r="2"/></svg></button>
    <button aria-label="Noticias" class="relative h-[29px]"><svg class="size-5 fill-none stroke-current stroke-[1.500]" viewBox="0 0 28 28"><path d="M4 24q3-3 1-6M4 14c6 1 8 5 7 10M4 9c10 1 13 8 13 15M12 6c8 3 12 10 12 18"/></svg><span class="absolute -right-1 top-0.5 w-[17px] h-2.5 rounded-full bg-[#e8304f] text-white text-[8px] leading-[10px] font-bold text-center">99+</span></button>
    <button aria-label="Notificaciones" class="h-[31px]"><svg class="size-5 fill-none stroke-current stroke-[1.500]" viewBox="0 0 28 28"><path d="M3 22q3-3 3-8c0-12 16-12 16 0q0 5 3 8zM11 22q3 6 6 0M14 5V3"/></svg></button>
    <button aria-label="Productos" class="h-[35px]"><svg class="size-[22px]" viewBox="0 0 22 22"><circle cx="11" cy="11" r="11" fill="#fff"/><path d="M5 5h3v3H5zM9.500 5h3v3h-3zM14 5h3v3h-3zM5 9.500h3v3H5zM9.500 9.500h3v3h-3zM14 9.500h3v3h-3zM5 14h3v3H5zM9.500 14h3v3h-3zM14 14h3v3h-3z" fill="#0f0f0f"/></svg></button>
    <span class="w-[22px] h-px bg-[#3a3a3a]"></span>
    <button aria-label="Ayuda" class="h-[35px]"><svg class="size-[19px] fill-none stroke-current stroke-[1.500]" viewBox="0 0 28 28"><circle cx="14" cy="14" r="12.500"/><path d="M10 11c0-6 8-5 8-1 0 3-4 3-4 7M14 20v2"/></svg></button>
  </aside>
</div>

<!-- Taskbar -->
<footer class="h-8 shrink-0 flex items-center border-t border-[#333] bg-[#1b1b1b] font-['Open_Sans','Noto_Sans',sans-serif] text-[9px]">
  <div class="flex-1 flex items-center pl-3 gap-0.5 leading-[11px] pb-px">
    <svg class="w-[19px] h-[18px] mb-1.5" viewBox="0 0 19 18"><path d="M3 16a3 3 0 010-6q2-5 6-2 4-1 5 3 4 0 3 5z" fill="#bcd3f2"/><circle cx="14" cy="5" r="5" fill="#e8738a"/><text x="14" y="8" text-anchor="middle" font-size="8" fill="#301018">3</text></svg>
    <div class="text-[8px]">22°C<br>Nublado</div>
  </div>
  <div class="flex items-center *:shrink-0">
    <button aria-label="Inicio" class="w-7 grid place-items-center"><svg class="size-4" viewBox="0 0 16 16" fill="#3fbdf0"><path d="M0 0h7.600v7.600H0zM8.400 0H16v7.600H8.400zM0 8.400h7.600V16H0zM8.400 8.400H16V16H8.400z"/></svg></button>
    <label class="w-[147px] h-[22px] mx-0.5 flex items-center gap-2 pl-2 rounded-full border border-[#444] bg-[#353535] overflow-hidden"><svg class="size-[11px] shrink-0 fill-none stroke-white stroke-3"><use href="#search"/></svg><input type="search" aria-label="Buscar" placeholder="Buscar" class="w-0 flex-1 bg-transparent placeholder:text-[#bbb] text-[9px]"><svg class="w-[35px] h-[20px]" viewBox="0 0 35 20"><path d="M1 12Q4 2 14 3q12-2 20 9-3 7-10 7H8q-7-1-7-7z" fill="#a9bd7e"/><circle cx="8" cy="8" r="5" fill="#a8dbe0"/><path d="M11 17l1-10q4-6 8 0l1 11z" fill="#c89256"/><path d="M21 6q9 0 11 8-5 5-10 4z" fill="#65984a"/><path d="M14 2h9l-2 5h-5z" fill="#e7c58c"/><circle cx="15" cy="11" r="1" fill="#4e341f"/><circle cx="25" cy="10" r="1.500" fill="#eee2b0"/></svg></label>
    <button aria-label="Vista de tareas" class="w-[30px] grid place-items-center"><svg class="w-[17px] h-[15px]" viewBox="0 0 17 15"><path d="M4 1h13v11H4z" fill="#e8e8e8"/><path d="M0 5h12v9H0z" fill="#8c8c8c" opacity=".8"/></svg></button>
    <button aria-label="Copilot" class="w-[29px] grid place-items-center"><svg class="size-[15px]" viewBox="0 0 16 16"><path d="M5 1h5l2 4-3 7H4Q0 11 1 7 2 1 5 1z" fill="#2d8be6"/><path d="M11 15H6l-2-3 3-8h5q4 1 3 5-1 6-4 6z" fill="#d755a8"/><path d="M1 9l4 6q3 0 4-6z" fill="#edb63a"/><path d="M10 1q3 0 4 4l-5-1z" fill="#6a63e8"/><path d="M7 6.500h2L8 9.500H6z" fill="#1b1b1b"/></svg></button>
    <button aria-label="Explorador" class="relative w-[29px] grid place-items-center"><svg class="w-4 h-[15px]" viewBox="0 0 16 15"><path d="M0 1h6l2 2h8v11H0z" fill="#eaa92e"/><path d="M0 5h16v9H0z" fill="#fbd35a"/><path d="M4 9h8v5H4z" fill="#2d83c8"/></svg><i class="absolute -bottom-1 w-1 h-0.5 rounded bg-[#999]"></i></button>
    <button aria-label="Store" class="w-[30px] grid place-items-center"><svg class="size-4" viewBox="0 0 16 16"><path d="M5 3V1h6v2" fill="none" stroke="#4bb7ec" stroke-width="1.500"/><rect y="3" width="16" height="13" rx="2" fill="#f0f4f8"/><path d="M5 6h2.700v2.700H5z" fill="#e64a2e"/><path d="M8.300 6H11v2.700H8.300z" fill="#7ab82f"/><path d="M5 9.300h2.700V12H5z" fill="#279ae0"/><path d="M8.300 9.300H11V12H8.300z" fill="#f4b62a"/></svg></button>
    <button aria-label="Brave" class="relative w-[29px] grid place-items-center"><svg class="w-[13px] h-4" viewBox="0 0 13 16"><path d="M3 0h7l3 3-1 9-5.500 4L1 12 0 3z" fill="#e3403a"/><path d="M2 4l4.500-1L11 4 9.500 9l-3 4-3-4z" fill="#fff"/><path d="M4 6.500l2 1M9 6.500l-2 1M5 10h3" stroke="#e3403a"/></svg><i class="absolute -bottom-1 w-1 h-0.5 rounded bg-[#999]"></i></button>
    <button aria-label="TradingView" class="relative w-[27px] h-7 mx-px grid place-items-center rounded bg-[#282828]"><span class="size-[17px] grid place-items-center rounded-xs bg-black"><svg class="w-3.5 h-2 fill-white"><use href="#tv"/></svg></span><i class="absolute bottom-0 w-2.5 h-0.5 rounded bg-[#e66a7c]"></i></button>
    <button aria-label="Finanzas" class="w-[30px] grid place-items-center"><svg class="size-4" viewBox="0 0 16 16"><path d="M8 0l7 13H1z" fill="#4d9c5b"/><circle cx="12.500" cy="12" r="3.500" fill="#297bb0"/><circle cx="3" cy="12" r="3" fill="#e0b33a"/><circle cx="8" cy="9" r="4.500" fill="#e8cf6a"/><text x="8" y="12" text-anchor="middle" font-size="8" font-weight="700" fill="#fff">S</text></svg></button>
    <button aria-label="WhatsApp" class="relative w-[29px] grid place-items-center"><svg class="size-[18px]" viewBox="0 0 18 18"><path d="M2 16l1-4a7 7 0 113 3z" fill="#113c20" stroke="#36cf68" stroke-width="1.700"/><path d="M6 6q0 5 6 6l1-2-2-1-1 1-2-2 1-1-1-2z" fill="#fff"/></svg><span class="absolute right-0 -top-1 size-2.5 rounded-full bg-[#ec6a67] text-[#401010] text-[8px] leading-[10px]">5</span><i class="absolute -bottom-[3px] w-1 h-0.5 rounded bg-[#999]"></i></button>
    <button aria-label="Notion" class="w-[30px] grid place-items-center"><svg class="size-[15px]" viewBox="0 0 15 15"><path d="M1 1.500L11 1l3 2v11L4 14.500 1 12z" fill="#111" stroke="#ddd"/><path d="M4 4l9-.5M6 12V6l5 5.500V5.500" fill="none" stroke="#fff" stroke-width="1.300"/></svg></button>
    <button aria-label="Telegram" class="w-[29px] grid place-items-center"><svg class="size-4" viewBox="0 0 16 16"><circle cx="8" cy="8" r="8" fill="#38a5dc"/><path d="M3 8l9-4-1.500 8.500L8 10.500 6.500 12V9.500L10 6 5.500 9z" fill="#fff"/></svg></button>
    <button aria-label="Chrome" class="w-[29px] grid place-items-center"><svg class="size-[18px]"><use href="#chrome"/></svg></button>
    <button aria-label="Spotify" class="relative w-[30px] grid place-items-center"><svg class="size-4" viewBox="0 0 16 16"><circle cx="8" cy="8" r="8" fill="#1ed05c"/><path d="M3.500 5.500q5-1.500 9 .8M4 8.200q4-1 7.500.8M4.500 10.700q3-.8 6 .8" fill="none" stroke="#111" stroke-width="1.300" stroke-linecap="round"/></svg><i class="absolute -bottom-1 w-1 h-0.5 rounded bg-[#999]"></i></button>
    <button aria-label="OBS" class="relative w-[29px] grid place-items-center"><svg class="size-4 overflow-visible" viewBox="0 0 16 16"><circle cx="8" cy="8" r="7.300" fill="#222" stroke="#ccc"/><path d="M4 3q0 4 4 5M13 6q-4-1-5 2M7 14q3-2 1-6" fill="none" stroke="#ccc" stroke-width="1.300"/><circle cx="14" cy="2" r="4" fill="#e0101c"/></svg><i class="absolute -bottom-1 w-1 h-0.5 rounded bg-[#999]"></i></button>
    <button aria-label="Chrome, perfil 2" class="relative w-[29px] grid place-items-center"><svg class="size-[18px]"><use href="#chrome"/></svg><svg class="absolute right-0 -top-1 size-2.5" viewBox="0 0 10 10"><circle cx="5" cy="5" r="5" fill="#cfc4bc"/><path d="M0 5q2-6 7-3l1 6-3-3z" fill="#3d2c28"/></svg><i class="absolute -bottom-[3px] w-1 h-0.5 rounded bg-[#999]"></i></button>
  </div>
  <div class="flex-1 flex items-center justify-end pr-3 leading-[11px] pb-px text-[8px]">
    <button aria-label="Iconos ocultos"><svg class="size-2.5 fill-none stroke-white stroke-3"><use href="#chevup"/></svg></button>
    <svg class="ml-2.5 w-3 h-2.5" viewBox="0 0 12 10"><path d="M3 9a2.500 2.500 0 010-5q2-4 5-1 4 0 3.500 3.500Q11 9 9 9z" fill="#ccc"/></svg>
    <svg class="ml-3 w-2 h-3 fill-none stroke-[#cf8f78] stroke-1" viewBox="0 0 8 12"><rect x="2.500" y=".5" width="3" height="6.500" rx="1.500"/><path d="M.5 5q0 4 3.500 4t3.500-4M4 9v2.500"/></svg>
    <div class="ml-3 w-6 text-center">ESP<br>LAA</div>
    <svg class="ml-2.5 w-2.5 h-2.5 fill-none stroke-white stroke-1" viewBox="0 0 10 10"><path d="M.5 4q4.500-4 9 0M2 6q3-2.500 6 0M4 8q1-1 2 0"/></svg>
    <svg class="ml-1.5 w-3 h-2.5 fill-none stroke-white stroke-1" viewBox="0 0 12 10"><path d="M.5 3.500h2l3-2.500v8l-3-2.500h-2zM7.500 3q1.500 2 0 4M9.500 1.500q3 3.500 0 7"/></svg>
    <svg class="ml-1 w-4 h-2.5" viewBox="0 0 16 10"><rect x="2" y="1.500" width="11" height="7" rx="2" fill="#3d7c4c" stroke="#ccc"/><path d="M14.500 4v2" stroke="#ccc"/><path d="M5 0L1 5h3L3 9l4-5H4z" fill="#fff"/></svg>
    <time class="ml-2 w-[44px] whitespace-nowrap flex flex-col items-end">00:28<span>16/01/2026</span></time>
  </div>
</footer>

<script>
// Price axis, 4 points per step
const prices = document.getElementById('prices');
for (let p = 652; p >= 560; p -= 4) {
  const s = document.createElement('span');
  s.textContent = '4.' + p + ',00';
  s.style.lineHeight = '10px';
  prices.append(s);
}
// Closing levels along the session: x, y pairs
const path = [38,150,42,151,44,188,48,163,52,168,56,177,58,195,61,178,62,222,65,188,70,185,73,196,75,226,79,220,83,240,86,246,92,245,94,213,98,212,100,245,101,288,104,268,107,292,108,311,113,306,117,320,119,283,122,300,125,275,129,267,137,264,143,272,148,300,152,275,155,300,157,268,160,308,163,338,164,366,167,352,169,399,172,365,174,345,178,322,180,354,183,330,186,282,190,282,192,305,195,298,199,315,204,335,207,363,209,365,213,400,216,401,218,422,221,432,223,405,226,372,229,372,231,388,235,395,238,420,240,420,241,387,244,390,247,376,250,385,253,382,256,403,259,397,261,383,264,396,269,410,273,423,275,426,277,392,279,430,281,440,283,408,286,398,288,373,291,380,294,350,296,330,299,310,302,309,304,332,307,345,310,325,313,308,316,303,320,307,323,310,326,290,329,302,332,302,335,308,336,335,340,337,345,346,348,355,351,343,354,325,356,326,358,345,361,340,364,334,366,322,369,338,374,334,377,346,381,336,385,342,388,330,391,308,394,306,397,290,400,292,403,305,405,292,409,288,412,276,414,292,417,281,418,262,423,256,427,254,430,251,433,256,438,263,440,258,445,243,447,242,448,260,452,268,456,255,458,257,461,265,464,280,468,272,471,272,474,265,477,270,479,284,483,290,486,298,488,290,490,295,492,328,494,317,498,327,499,381,503,393,506,418,509,403,511,418,514,398,516,377,519,355,523,337,526,315,529,309,531,340,534,310,537,287,541,309,545,275,548,268,551,268,554,282,558,295,562,275,565,272,568,303,571,276,573,240,575,240,576,246,578,267,582,295,584,321,588,317,590,337,592,344,594,343,596,318,600,306,603,303,606,288,609,299,611,279,615,278,620,282,623,268,627,252,631,250,634,253,636,257,638,270,641,262,643,272,646,258,648,272,651,255,654,252,656,243,659,255,663,257,666,260,669,272,673,270,678,274,681,283,682,325,685,326,687,347,690,340,692,325,695,318,699,313,702,325,705,326,708,300,712,283,716,278,719,275,722,283,725,275,730,278,734,262,736,257,738,280,742,283,745,297,747,307,751,308,755,320,759,301,761,302,763,328,767,325,770,313,774,315,776,335,780,345,784,353,789,360,791,360,793,334,797,338,800,330,803,323,805,344,808,328,812,335,815,352,819,350,822,365,826,340,828,340,829,355,831,384,835,378,838,374,840,395,843,395,846,375,850,362,853,360,857,378,859,391,862,372,866,376,870,374,874,362,878,359,881,352,885,368,890,358,895,354,898,348,903,358,905,378,908,370,910,360,912,348];
const level = x => {
  let i = 0;
  while (i < path.length - 4 && path[i + 2] < x) i += 2;
  const t = Math.min(1, Math.max(0, (x - path[i]) / (path[i + 2] - path[i])));
  return path[i + 1] + t * (path[i + 3] - path[i + 1]);
};
let seed = 7;
const rnd = () => (seed = (seed * 16807) % 2147483647) / 2147483647;
const d = { up: '', down: '', wu: '', wd: '' };
for (let x = 38; x < 911; x += 2.3) {
  const o = level(x), c = level(x + 2.3), px = Math.round(x);
  const top = Math.min(o, c), h = Math.max(2, Math.abs(o - c));
  const rising = c < o || (Math.abs(o - c) < 1.5 && rnd() > .5);
  const w1 = rnd() * rnd() * 14, w2 = rnd() * rnd() * 14;
  d[rising ? 'up' : 'down'] += `M${px + 1} ${Math.round(top)}v${Math.round(h + rnd() * 5)}`;
  if (x < 908) d[rising ? 'wu' : 'wd'] += `M${px + .5} ${Math.round(top - w1)}v${Math.round(h + w1 + w2)}`;
}
// Long shadows: x, high, low
for (const [x, a, b] of [[41,140,152],[47,138,165],[44,185,216],[98,185,214],[117,320,340],[168,395,440],[221,430,453],[218,420,445],[281,435,452],[278,425,443],[271,420,451],[506,415,447],[511,415,437],[575,226,242],[543,300,334],[789,360,386],[807,311,330],[637,268,285],[446,235,245],[327,285,295],[736,246,260],[842,392,400]])
  d.wd += `M${x + .5} ${a}V${b}`;
document.getElementById('up').setAttribute('d', d.up);
document.getElementById('down').setAttribute('d', d.down);
document.getElementById('wicksUp').setAttribute('d', d.wu);
document.getElementById('wicksDown').setAttribute('d', d.wd);
</script>
</body>
</html>
